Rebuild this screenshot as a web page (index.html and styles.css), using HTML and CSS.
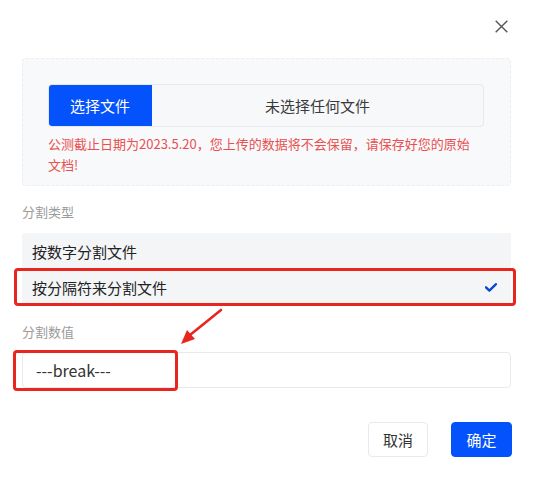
FILE: index.html
```html
<!DOCTYPE html>
<html lang="zh">
<head>
<meta charset="utf-8">
<link rel="stylesheet" href="styles.css">
</head>
<body>
<div class="page">
  <div class="close-row">
    <svg class="close" width="13" height="13" viewBox="0 0 13 13"><path d="M0.7 0.7 L12.3 12.3 M12.3 0.7 L0.7 12.3" stroke="#555" stroke-width="1.4" fill="none"/></svg>
  </div>
  <div class="content">
    <div class="upload-box">
      <div class="file-input">
        <div class="file-btn">选择文件</div>
        <div class="file-name">未选择任何文件</div>
      </div>
      <p class="notice">公测截止日期为2023.5.20，您上传的数据将不会保留，请保存好您的原始文档!</p>
    </div>
    <div class="label label-type">分割类型</div>
    <div class="options">
      <div class="option">按数字分割文件</div>
      <div class="option selected">按分隔符来分割文件
        <svg class="check" width="12" height="9" viewBox="0 0 12 9"><polyline points="1,4.3 4.4,7.6 11,1.2" stroke="#0a46d6" stroke-width="2.3" fill="none" stroke-linecap="round" stroke-linejoin="round"/></svg>
      </div>
    </div>
    <div class="label label-value">分割数值</div>
    <div class="text-input">---break---</div>
    <div class="footer">
      <button class="btn btn-cancel">取消</button>
      <button class="btn btn-ok">确定</button>
    </div>
  </div>
  <div class="ann ann-option"></div>
  <div class="ann ann-input"></div>
  <svg class="ann-arrow" width="50" height="40" viewBox="0 0 50 40">
    <path d="M45 2 L14 27" stroke="#e8251e" stroke-width="2.6" stroke-linecap="round" fill="none"/>
    <polygon points="5,36 11,22 19,31" fill="#e8251e"/>
  </svg>
</div>
</body>
</html>
```
FILE: styles.css
```css
* { box-sizing: border-box; }
html, body { margin: 0; padding: 0; background: #fff; }
body {
  font-family: "Noto Sans CJK SC", "Noto Sans", sans-serif;
  color: #333;
}
.page {
  position: relative;
  width: 537px;
  height: 478px;
  overflow: hidden;
}
.close-row {
  display: flex;
  justify-content: flex-end;
  height: 58px;
  padding: 20px 29px 0 0;
}
.close { display: block; }
.content {
  margin: 0 26px 0 22px;
}
.upload-box {
  height: 128px;
  background: #f8f9fb;
  border: 1px dashed #eceef1;
  border-radius: 4px;
  padding: 25px 26px 0 25px;
}
.file-input {
  display: flex;
  height: 43px;
  border: 1px solid #e7e8ec;
  border-radius: 4px;
  background: #f7f8fa;
  overflow: hidden;
}
.file-btn {
  width: 104px;
  margin: -1px 0 -1px -1px;
  background: #0352fb;
  color: #fff;
  font-size: 15px;
  display: flex;
  align-items: center;
  justify-content: center;
  border-radius: 4px 0 0 4px;
}
.file-name {
  flex: 1;
  display: flex;
  align-items: center;
  justify-content: center;
  font-size: 15px;
  color: #3a3a3a;
}
.notice {
  margin: 6px 0 0 0;
  max-width: 428px;
  font-size: 13px;
  line-height: 21px;
  color: #e9504f;
}
.label {
  font-size: 13px;
  line-height: 20px;
  color: #9b9b9b;
}
.label-type { margin: 16px 0 11px; }
.label-value { margin: 17px 0 10px; }
.options {
  background: #f4f5f7;
  border-radius: 2px;
}
.option {
  display: flex;
  align-items: center;
  justify-content: space-between;
  height: 36px;
  padding: 0 14px 0 10px;
  font-size: 15px;
  color: #222;
}
.check { display: block; }
.text-input {
  height: 36px;
  border: 1px solid #e8e9ec;
  border-radius: 4px;
  padding-left: 13px;
  display: flex;
  align-items: center;
  font-size: 16px;
  color: #333;
  background: #fff;
}
.footer {
  display: flex;
  justify-content: flex-end;
  gap: 23px;
  margin: 34px -1px 0 0;
}
.btn {
  height: 35px;
  border-radius: 4px;
  font-family: inherit;
  font-size: 15px;
  padding: 0;
  cursor: pointer;
}
.btn-cancel {
  width: 60px;
  background: #fff;
  border: 1px solid #e9e9e9;
  color: #333;
}
.btn-ok {
  width: 61px;
  background: #0352fb;
  border: 1px solid #0352fb;
  color: #fff;
}
.ann {
  position: absolute;
  border: 3px solid #e8251e;
  border-radius: 4px;
}
.ann-option { left: 14px; top: 268px; width: 502px; height: 38px; }
.ann-input { left: 13px; top: 350px; width: 165px; height: 41px; }
.ann-arrow { position: absolute; left: 176px; top: 308px; }
```
